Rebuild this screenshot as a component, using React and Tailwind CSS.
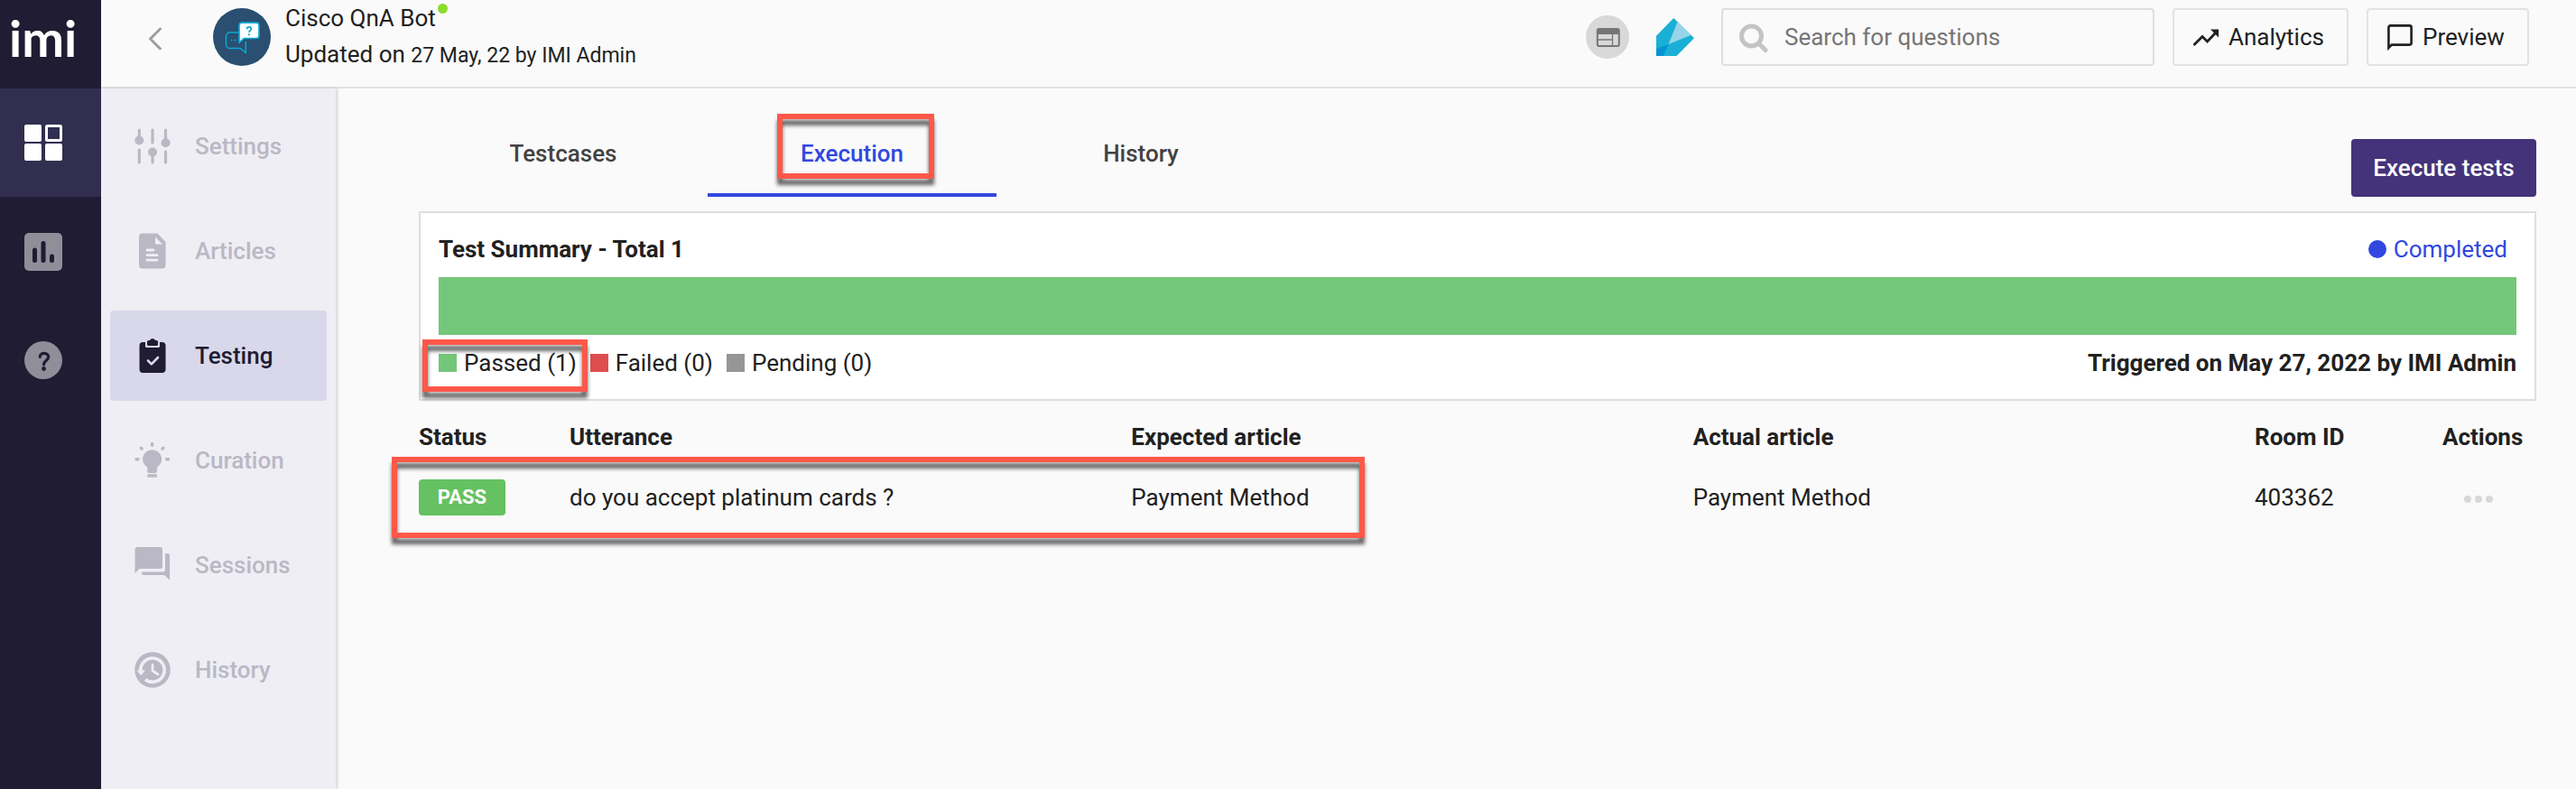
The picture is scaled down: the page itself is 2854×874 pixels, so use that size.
import React from "react";

const MARK = "pointer-events-none absolute border-[6px] border-[#ff584a] drop-shadow-[0_7px_2px_rgba(0,0,0,0.6)]";

function GridIcon() {
  return (
    <svg width="42" height="42" viewBox="0 0 42 42" fill="#fff">
      <rect x="0" y="1" width="19" height="19" rx="2" />
      <rect x="0" y="22" width="19" height="19" rx="2" />
      <rect x="23" y="22" width="19" height="19" rx="2" />
      <rect x="24.5" y="2.5" width="16" height="16" rx="1" fill="none" stroke="#fff" strokeWidth="3" />
    </svg>
  );
}

function ChartIcon() {
  return (
    <svg width="42" height="42" viewBox="0 0 42 42">
      <rect width="42" height="42" rx="5" fill="#8f8e99" />
      <path d="M11.5 19v11.500M21 11.500v19M30.500 26v4.500" stroke="#1f1c33" strokeWidth="5" strokeLinecap="round" />
    </svg>
  );
}

function HelpIcon() {
  return (
    <svg width="42" height="42" viewBox="0 0 42 42">
      <circle cx="21" cy="21" r="21" fill="#8f8e99" />
      <path d="M17.300 17.300C17.300 14.800 19.300 13.300 22 13.300s4.700 1.700 4.700 4.200c0 3.600-5.200 4-5.200 8.300" fill="none" stroke="#1f1c33" strokeWidth="3.200" strokeLinecap="round" />
      <circle cx="21.500" cy="30.500" r="2.400" fill="#1f1c33" />
    </svg>
  );
}

function SettingsIcon() {
  return (
    <svg width="40" height="40" viewBox="0 0 40 40" fill="currentColor" stroke="currentColor" strokeWidth="3.200" strokeLinecap="round">
      <path d="M5.300 2v10M5.300 24v14M20 2v14M20 27v11M34.500 2v12M34.500 26v12" />
      <g stroke="none">
        <circle cx="5.300" cy="13.500" r="5" />
        <circle cx="20" cy="26.500" r="5" />
        <circle cx="34.500" cy="16.200" r="5" />
      </g>
    </svg>
  );
}

function ArticleIcon() {
  return (
    <svg width="40" height="40" viewBox="0 0 40 40">
      <path d="M9 .5h16.500L34.500 10v25.500a4 4 0 0 1-4 4H9a4 4 0 0 1-4-4v-31a4 4 0 0 1 4-4z" fill="currentColor" />
      <path d="M23 4.500l8 8h-6.500a1.500 1.500 0 0 1-1.500-1.500z" fill="#efeef4" />
      <path d="M14 19h7M14 24.700h11M14 30.200h11" stroke="#efeef4" strokeWidth="2.800" strokeLinecap="round" />
    </svg>
  );
}

function TestingIcon() {
  return (
    <svg width="40" height="40" viewBox="0 0 40 40">
      <path d="M9.500 5h21a4 4 0 0 1 4 4v26a4 4 0 0 1-4 4h-21a4 4 0 0 1-4-4V9a4 4 0 0 1 4-4z" fill="currentColor" />
      <path d="M12 4v5.500a1.500 1.500 0 0 0 1.500 1.500h13a1.500 1.500 0 0 0 1.500-1.500V4z" fill="#d8d8ea" />
      <path d="M15.500 3H17a3.200 3.200 0 0 1 6 0h1.500A1.500 1.500 0 0 1 26 4.500v3A1.500 1.500 0 0 1 24.500 9h-9A1.500 1.500 0 0 1 14 7.500v-3A1.500 1.500 0 0 1 15.500 3z" fill="currentColor" />
      <path d="M15 25.500l3.800 3.800 7.200-7.300" fill="none" stroke="#d8d8ea" strokeWidth="2.600" strokeLinecap="round" strokeLinejoin="round" />
    </svg>
  );
}

function BulbIcon() {
  return (
    <svg width="40" height="40" viewBox="0 0 40 40" fill="currentColor">
      <path d="M19.600 8.200a10.500 10.500 0 0 0-5.400 19.500V32a2 2 0 0 0 2 2h6.800a2 2 0 0 0 2-2v-4.300A10.500 10.500 0 0 0 19.600 8.200z" />
      <rect x="14.300" y="35.200" width="10.700" height="3.600" rx="1.200" />
      <path d="M19.600 1.500v1.800M2 18.700h2M35.500 18.700h2M7.200 6.200l.9 1M31.900 6.200l-.9 1" stroke="currentColor" strokeWidth="3.400" strokeLinecap="round" />
    </svg>
  );
}

function SessionsIcon() {
  return (
    <svg width="40" height="40" viewBox="0 0 40 40" fill="currentColor">
      <path d="M3 0h25a3 3 0 0 1 3 3v18a3 3 0 0 1-3 3H5.500L.5 29V3A3 3 0 0 1 3 0z" />
      <path d="M34 7h2a3 3 0 0 1 3 3v26.500L33.200 31H10.500A2.500 2.500 0 0 1 8 28.500v-1h23.500A2.500 2.500 0 0 0 34 25z" />
    </svg>
  );
}

function HistoryIcon() {
  return (
    <svg width="40" height="40" viewBox="0 0 40 40">
      <circle cx="20" cy="20" r="19.800" fill="currentColor" />
      <path d="M6.800 21A13.200 13.200 0 1 1 12 30.700" fill="none" stroke="#efeef4" strokeWidth="3.600" />
      <path d="M2.500 20.500h9.500l-4.700 5.700z" fill="#efeef4" />
      <path d="M20 14.500v6.500l6 4" fill="none" stroke="#efeef4" strokeWidth="2.800" strokeLinecap="round" strokeLinejoin="round" />
    </svg>
  );
}

function BotAvatar() {
  return (
    <svg className="shrink-0" width="64" height="64" viewBox="0 0 64 64">
      <circle cx="32" cy="32" r="32" fill="#2a4f70" />
      <path d="M29 27H18.500a4 4 0 0 0-4 4v9.500a4 4 0 0 0 4 4H30l6.300 5V37" fill="none" stroke="#0aaad6" strokeWidth="1.500" />
      <path d="M32 16.200h16a3 3 0 0 1 3 3v11.300a3 3 0 0 1-3 3H34.500L29 38V19.200a3 3 0 0 1 3-3z" fill="#fff" stroke="#0aaad6" strokeWidth="1.700" />
      <path d="M37.500 23.300c0-1.600 1-2.500 2.400-2.500s2.400.9 2.400 2.200c0 1.800-2.400 1.900-2.400 4" fill="none" stroke="#0aaad6" strokeWidth="1.700" />
      <circle cx="39.900" cy="29.300" r="1.100" fill="#0aaad6" />
      <circle cx="20.500" cy="35.500" r="1" fill="#0aaad6" />
      <circle cx="24.500" cy="35.500" r="1" fill="#0aaad6" />
    </svg>
  );
}

function WindowIcon() {
  return (
    <svg width="48" height="48" viewBox="0 0 48 48">
      <circle cx="24" cy="24" r="24" fill="#d8d8d8" />
      <rect x="12.800" y="15" width="24" height="19" rx="2" fill="none" stroke="#757575" strokeWidth="2" />
      <path d="M12.800 15h24v6h-24z" fill="#757575" />
      <path d="M12.800 27h16.500M29.500 21v13" stroke="#757575" strokeWidth="1.300" />
    </svg>
  );
}

function GemIcon() {
  return (
    <svg width="42" height="42" viewBox="0 0 42 42">
      <path d="M19.300 0L42 22.300 22.500 42H0V19.700z" fill="#1ab0d5" />
      <path d="M23.500 4.200l15.300 14.500L13.600 29z" fill="#97d4e9" />
      <path d="M0 34l13.600-5L8 42H0z" fill="#0594d2" />
    </svg>
  );
}

function SearchIcon() {
  return (
    <svg className="shrink-0" width="32" height="36" viewBox="0 0 32 36" fill="none" stroke="#c4c4c4">
      <circle cx="13.500" cy="17" r="11" strokeWidth="5" />
      <path d="M22 25.500l7 7" strokeWidth="5" strokeLinecap="round" />
    </svg>
  );
}

function TrendIcon() {
  return (
    <svg width="30" height="30" viewBox="0 0 30 30">
      <path d="M1.500 24l9.500-9.500 5.500 5.500L26 10" fill="none" stroke="#212121" strokeWidth="2.800" />
      <path d="M20 6.500h9v9z" fill="#212121" />
    </svg>
  );
}

function ChatIcon() {
  return (
    <svg width="30" height="30" viewBox="0 0 30 30">
      <path d="M2.400 27V4.400a2 2 0 0 1 2-2h21.200a2 2 0 0 1 2 2v17.200a2 2 0 0 1-2 2H5.800z" fill="none" stroke="#212121" strokeWidth="2.600" />
    </svg>
  );
}

const rail = [
  { label: "Dashboard", icon: <GridIcon />, active: true },
  { label: "Reports", icon: <ChartIcon /> },
  { label: "Help", icon: <HelpIcon /> },
];

const sections = [
  { label: "Settings", icon: <SettingsIcon /> },
  { label: "Articles", icon: <ArticleIcon /> },
  { label: "Testing", icon: <TestingIcon />, active: true },
  { label: "Curation", icon: <BulbIcon /> },
  { label: "Sessions", icon: <SessionsIcon /> },
  { label: "History", icon: <HistoryIcon /> },
];

function Header() {
  const outlined = "flex h-16 items-center gap-[10px] whitespace-nowrap rounded-sm border-2 border-[#e2e2e2] px-5";
  return (
    <header className="flex h-[98px] items-center border-b-2 border-[#e2e2e2] pb-[14px] pr-[52px]">
      <button aria-label="Back" className="ml-[50px] mr-[55px]">
        <svg width="19" height="28" viewBox="0 0 19 28" fill="none" stroke="#9e9e9e" strokeWidth="3">
          <path d="M15.500 5L4.500 16l11 11" strokeLinecap="round" strokeLinejoin="round" />
        </svg>
      </button>
      <BotAvatar />
      <div className="ml-4 leading-10">
        <h1 className="flex items-start gap-[2px]">
          Cisco QnA Bot
          <span className="mt-1 size-[11px] rounded-full bg-[#8bdc2c]" />
        </h1>
        <p>
          Updated on <span className="text-[23px]">27 May, 22 by IMI Admin</span>
        </p>
      </div>
      <div className="ml-auto flex items-center">
        <button aria-label="Web widget" className="mr-[30px]"><WindowIcon /></button>
        <button aria-label="Assistant" className="mr-[30px]"><GemIcon /></button>
        <label className="mr-5 flex h-16 w-[480px] items-center gap-[18px] rounded-sm border-2 border-[#dedede] px-[18px]">
          <SearchIcon />
          <input
            type="search"
            aria-label="Search for questions"
            placeholder="Search for questions"
            className="w-full min-w-0 bg-transparent outline-none placeholder:text-[#757575]"
          />
        </label>
        <button className={outlined + " mr-5 w-[195px]"}><TrendIcon />Analytics</button>
        <button className={outlined + " w-[180px]"}><ChatIcon />Preview</button>
      </div>
    </header>
  );
}

function Summary() {
  return (
    <section className="border-2 border-[#dedede] bg-white px-5 pb-5 pt-5">
      <div className="flex h-10 items-center justify-between">
        <h2 className="font-bold">Test Summary - Total 1</h2>
        <span className="mr-[10px] flex items-center gap-2 text-[#3048e0]">
          <span className="size-5 rounded-full bg-[#3048e0]" />
          Completed
        </span>
      </div>
      <div className="mt-[11px] h-16 bg-[#74c679]" />
      <div className="mt-[11px] flex h-10 items-center justify-between">
        <div className="flex gap-[15px]">
          <span className="relative flex items-center gap-2">
            <span className="size-5 bg-[#74c679]" />
            Passed (1)
            <span className={MARK + " -left-[18px] -right-3 -top-[10px] h-[58px]"} />
          </span>
          <span className="flex items-center gap-2">
            <span className="size-5 bg-[#de4e4e]" />
            Failed (0)
          </span>
          <span className="flex items-center gap-2">
            <span className="size-5 bg-[#969696]" />
            Pending (0)
          </span>
        </div>
        <p className="font-bold">Triggered on May 27, 2022 by IMI Admin</p>
      </div>
    </section>
  );
}

function Results() {
  return (
    <div className="relative mt-[18px]">
      <table className="w-full table-fixed text-left">
        <colgroup>
          <col className="w-[167px]" />
          <col />
          <col />
          <col />
          <col className="w-[208px]" />
          <col className="w-[104px]" />
        </colgroup>
        <thead>
          <tr className="h-11 whitespace-nowrap">
            <th>Status</th>
            <th>Utterance</th>
            <th>Expected article</th>
            <th>Actual article</th>
            <th>Room ID</th>
            <th>Actions</th>
          </tr>
        </thead>
        <tbody>
          <tr className="h-[90px]">
            <td>
              <span className="flex h-10 w-24 items-center justify-center rounded bg-[#65c161] text-[22px] font-bold text-white">
                PASS
              </span>
            </td>
            <td>do you accept platinum cards ?</td>
            <td>Payment Method</td>
            <td>Payment Method</td>
            <td>403362</td>
            <td>
              <button aria-label="More actions" className="ml-6 flex gap-1 pt-1">
                <span className="size-2 rounded-full bg-[#d8d8d8]" />
                <span className="size-2 rounded-full bg-[#d8d8d8]" />
                <span className="size-2 rounded-full bg-[#d8d8d8]" />
              </button>
            </td>
          </tr>
        </tbody>
      </table>
      <span className={MARK + " -left-[30px] bottom-0 h-[90px] w-[1078px]"} />
    </div>
  );
}

export default function App() {
  const tab = "flex h-24 w-80 items-center justify-center border-b-4 pt-1 font-medium";
  return (
    <div className="flex min-h-screen bg-[#fafafa] font-[Roboto,'Liberation_Sans',sans-serif] text-[26px] leading-[32px] text-[#212121]">
      <nav aria-label="Main" className="flex w-28 shrink-0 flex-col bg-[#1f1c33]">
        <a href="#home" className="flex h-[98px] items-start pl-[10px] font-[Lato,sans-serif] text-[56px] font-bold leading-[84px] text-white">
          imi
        </a>
        {rail.map((item) => (
          <a
            key={item.label}
            href={"#" + item.label.toLowerCase()}
            aria-label={item.label}
            className={"flex h-[120px] items-center pl-[27px] " + (item.active ? "bg-[#312e50]" : "pt-[2px]")}
          >
            {item.icon}
          </a>
        ))}
      </nav>
      <div className="flex min-w-0 grow flex-col">
        <Header />
        <div className="flex grow">
          <nav aria-label="Bot" className="flex w-[260px] shrink-0 flex-col gap-4 bg-[#efeef4] px-[10px] pt-[14px] shadow-[2px_0_3px_rgba(0,0,0,0.14)]">
            {sections.map((item) => (
              <a
                key={item.label}
                href={"#" + item.label.toLowerCase()}
                className={
                  "flex h-[100px] items-center gap-[27px] rounded pl-[27px] font-medium " +
                  (item.active ? "bg-[#d8d8ea] text-[#1f1c33]" : "text-[#bab8c5]")
                }
              >
                {item.icon}
                {item.label}
              </a>
            ))}
          </nav>
          <main className="min-w-0 grow pl-[92px] pr-11 pt-6">
            <div className="mb-4 flex items-end justify-between">
              <div role="tablist" className="flex">
                <button role="tab" aria-selected="false" className={tab + " border-transparent text-[#424242]"}>Testcases</button>
                <button role="tab" aria-selected="true" className={tab + " border-[#3048e0] text-[#3048e0]"}>
                  <span className="relative">
                    Execution
                    <span className={MARK + " -left-[26px] -right-[34px] -top-[28px] h-[72px]"} />
                  </span>
                </button>
                <button role="tab" aria-selected="false" className={tab + " border-transparent text-[#424242]"}>History</button>
              </div>
              <button className="h-16 w-[205px] whitespace-nowrap rounded bg-[#44337a] font-medium text-white">Execute tests</button>
            </div>
            <Summary />
            <Results />
          </main>
        </div>
      </div>
    </div>
  );
}
